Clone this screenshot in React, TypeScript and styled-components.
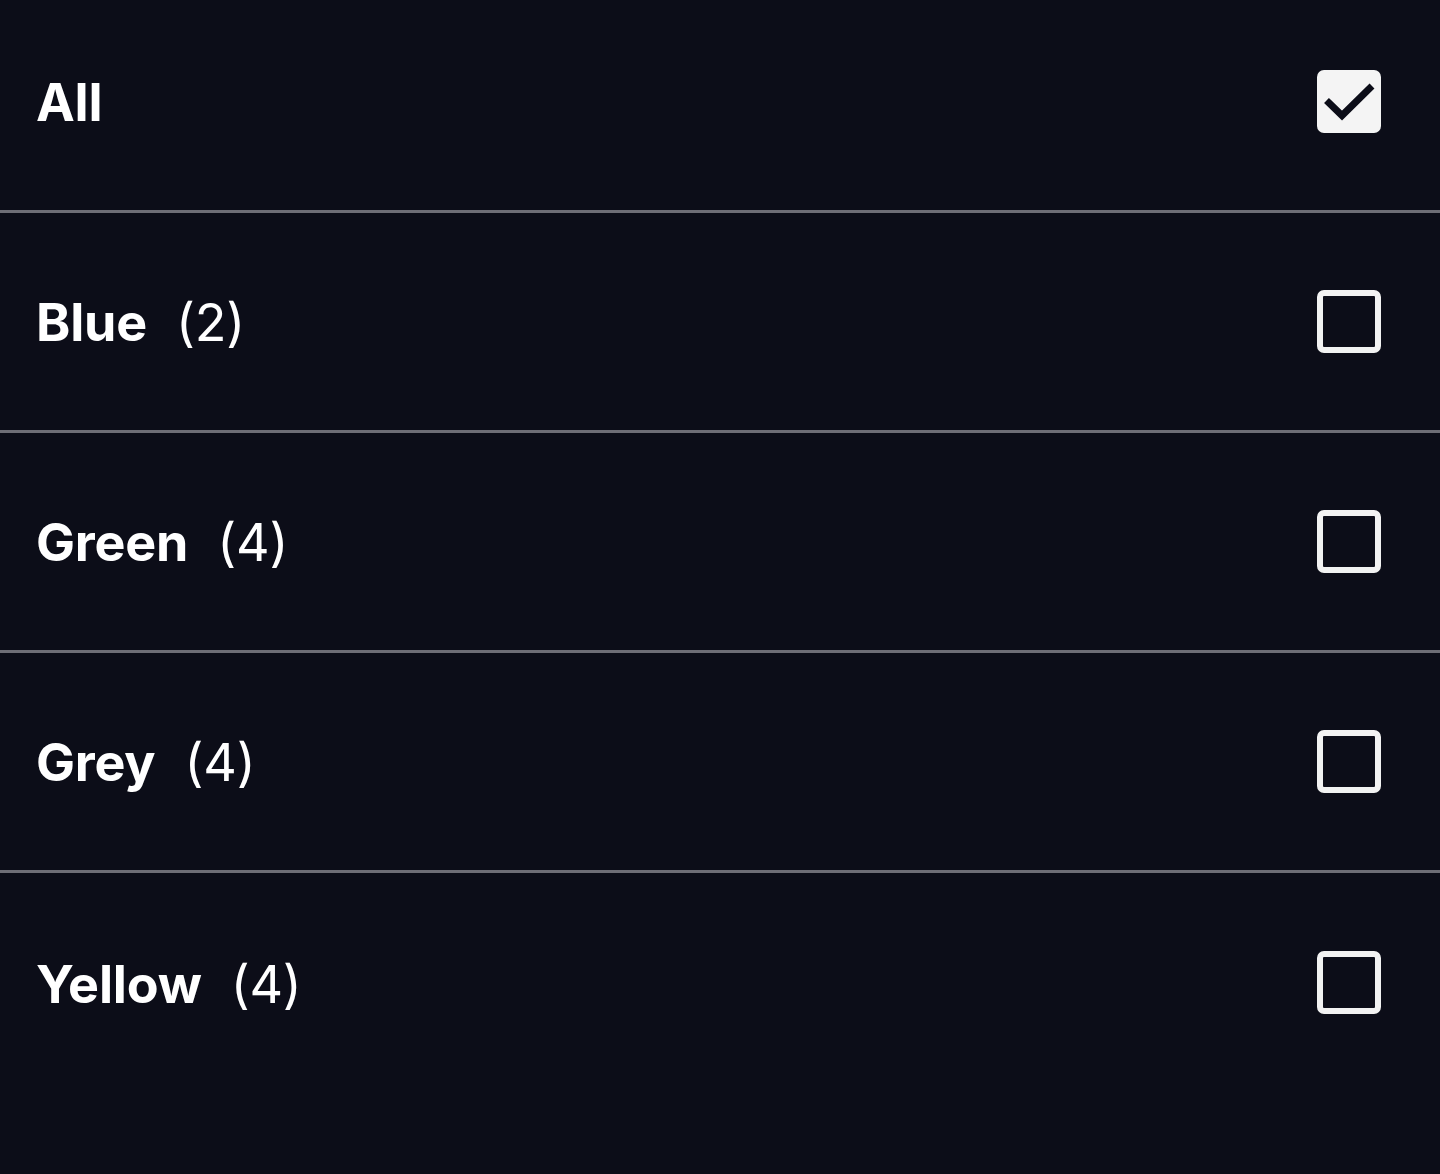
import React, { useState } from "react";
import styled, { createGlobalStyle } from "styled-components";

const GlobalStyle = createGlobalStyle`
    html, body {
        margin: 0;
        padding: 0;
        background-color: #0c0d18;
    }
    body {
        font-family: Inter, "Noto Sans", "Liberation Sans", sans-serif;
        color: #ffffff;
    }
`;

const Page = styled.div`
    width: 1440px;
    min-height: 1174px;
    background-color: #0c0d18;
`;

const List = styled.ul`
    list-style: none;
    margin: 0;
    padding: 0;
`;

const Row = styled.li<{ first?: boolean; last?: boolean }>`
    display: flex;
    flex-direction: row;
    align-items: center;
    justify-content: space-between;
    box-sizing: border-box;
    height: ${(props) => props.first ? "213px" : "220px"};
    padding: ${(props) => props.first ? "0 59px 8px 36px" : "0 59px 1px 36px"};
    border-bottom: ${(props) => props.last ? "none" : "3px solid #6e6e76"};
    cursor: pointer;
`;

const Label = styled.div`
    display: flex;
    flex-direction: row;
    align-items: baseline;
    gap: 29px;
    font-size: 52px;
    line-height: 1;
    letter-spacing: -0.2px;
    padding-top: 4px;
`;

const Name = styled.span`
    font-weight: 700;
`;

const Count = styled.span`
    font-weight: 400;
`;

const Box = styled.div<{ checked: boolean }>`
    width: 64px;
    height: 63px;
    box-sizing: border-box;
    border-radius: 7px;
    border: ${(props) => props.checked ? "none" : "6px solid #f2f2f2"};
    background-color: ${(props) => props.checked ? "#f4f4f4" : "transparent"};
    display: flex;
    align-items: center;
    justify-content: center;
`;

const CheckIcon = () => (
    <svg width="64" height="63" viewBox="0 0 64 63">
        <path d="M9.5 30.5 L25 45.5 L55 16" fill="none" stroke="#0c0d18" strokeWidth="7" />
    </svg>
);

const colours = [
    { name: "Blue", count: 2 },
    { name: "Green", count: 4 },
    { name: "Grey", count: 4 },
    { name: "Yellow", count: 4 },
];

export default function App() {
    const [all, setAll] = useState(true);
    const [picked, setPicked] = useState<Record<string, boolean>>({});

    return (
        <Page>
            <GlobalStyle />
            <List>
                <Row first onClick={() => setAll(!all)}>
                    <Label>
                        <Name>All</Name>
                    </Label>
                    <Box checked={all}>{all && <CheckIcon />}</Box>
                </Row>
                {colours.map((c, i) => {
                    const on = !!picked[c.name];
                    return (
                        <Row
                            key={c.name}
                            last={i === colours.length - 1}
                            onClick={() => setPicked({ ...picked, [c.name]: !on })}
                        >
                            <Label>
                                <Name>{c.name}</Name>
                                <Count>({c.count})</Count>
                            </Label>
                            <Box checked={on}>{on && <CheckIcon />}</Box>
                        </Row>
                    );
                })}
            </List>
        </Page>
    );
}
